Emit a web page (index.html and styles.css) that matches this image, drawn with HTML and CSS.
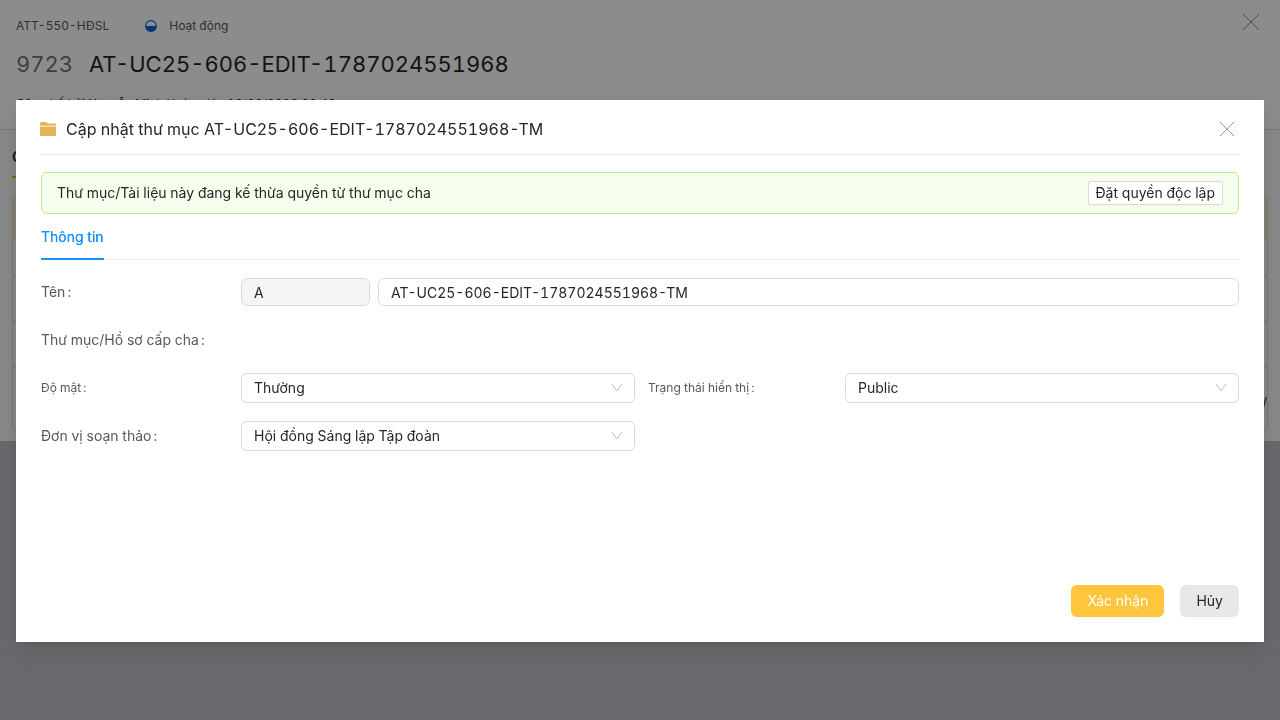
FILE: index.html
```
<!DOCTYPE html>
<html lang="vi">
<head>
  <meta charset="UTF-8" />
  <meta name="viewport" content="width=device-width, initial-scale=1.0" />
  <title>Cập nhật thư mục</title>
  <link rel="stylesheet" href="styles.css">
</head>
<body>

  <!-- ==== Record page ==== -->
  <div class="page">
    <header class="page-header">
      <div class="page-meta">
        <span class="page-code">ATT-550-HĐSL</span>
        <svg class="status-icon" viewBox="0 0 12 12" aria-hidden="true">
          <circle cx="6" cy="6" r="5.4" fill="#fff" stroke="#0065d6" stroke-width="1.1" />
          <path d="M0.6 6h10.8a5.4 5.4 0 0 1-10.8 0z" fill="#0065d6" />
        </svg>
        <span>Hoạt động</span>
        <button class="icon-btn page-close" type="button" aria-label="Đóng">
          <svg viewBox="0 0 18 18"><path d="M1 1l16 16M17 1L1 17" /></svg>
        </button>
      </div>
      <h1 class="page-title"><span class="page-number">9723</span>AT-UC25-606-EDIT-1787024551968</h1>
      <p class="page-author">Công bố bởi Nguyễn Minh Hoàng lúc 18/08/2026 09:40</p>
    </header>
    <section class="page-body">
      <nav class="page-tabs"><a href="#" class="page-tab">Chung</a></nav>
      <div class="panel">
        <div class="panel-head"></div>
        <div class="panel-row first"></div>
        <div class="panel-row"></div>
        <div class="panel-row"></div>
        <div class="panel-row last">/</div>
      </div>
    </section>
  </div>

  <!-- ==== Update folder dialog ==== -->
  <div class="mask">
    <div class="modal" role="dialog" aria-labelledby="modal-title">
      <div class="modal-header">
        <svg class="folder-icon" viewBox="0 0 16 14" aria-hidden="true">
          <path d="M0 5V1.2Q0 0 1.200 0H6l2 1.500h6.800Q16 1.500 16 2.700V5z" fill="#e5b35a" />
          <path d="M0 3.500h16v2H0z" fill="#f6dfb0" />
          <path d="M0 5h16v7.800q0 1.200-1.200 1.200H1.200Q0 14 0 12.800z" fill="#e5b35a" />
        </svg>
        <h2 id="modal-title" class="modal-title">Cập nhật thư mục AT-UC25-606-EDIT-1787024551968-TM</h2>
        <button class="icon-btn modal-close" type="button" aria-label="Đóng">
          <svg viewBox="0 0 18 18"><path d="M1 1l16 16M17 1L1 17" /></svg>
        </button>
      </div>

      <form class="modal-body">
        <div class="alert">
          <span>Thư mục/Tài liệu này đang kế thừa quyền từ thư mục cha</span>
          <button class="btn-small" type="button">Đặt quyền độc lập</button>
        </div>

        <nav class="tabs"><a href="#" class="tab active">Thông tin</a></nav>

        <div class="form">
          <div class="form-row">
            <label class="form-label" for="name">Tên</label>
            <div class="name-group">
              <input class="field field-prefix" type="text" value="A" aria-label="Tiền tố" disabled />
              <input id="name" class="field" type="text" value="AT-UC25-606-EDIT-1787024551968-TM" />
            </div>
          </div>

          <div class="form-row">
            <span class="form-label">Thư mục/Hồ sơ cấp cha</span>
          </div>

          <div class="form-row split">
            <div class="form-cell">
              <label class="form-label small" for="secrecy">Độ mật</label>
              <div class="select">
                <select id="secrecy"><option>Thường</option></select>
                <svg viewBox="0 0 12 12"><path d="M1 2l5 7 5-7" /></svg>
              </div>
            </div>
            <div class="form-cell">
              <label class="form-label small" for="visibility">Trạng thái hiển thị</label>
              <div class="select">
                <select id="visibility"><option>Public</option></select>
                <svg viewBox="0 0 12 12"><path d="M1 2l5 7 5-7" /></svg>
              </div>
            </div>
          </div>

          <div class="form-row split">
            <div class="form-cell">
              <label class="form-label" for="unit">Đơn vị soạn thảo</label>
              <div class="select">
                <select id="unit"><option>Hội đồng Sáng lập Tập đoàn</option></select>
                <svg viewBox="0 0 12 12"><path d="M1 2l5 7 5-7" /></svg>
              </div>
            </div>
          </div>
        </div>

        <div class="modal-footer">
          <button class="btn btn-primary" type="submit">Xác nhận</button>
          <button class="btn" type="button">Hủy</button>
        </div>
      </form>
    </div>
  </div>

</body>
</html>
```

FILE: styles.css
```
:root {
  --clr-text: #262626;
  --clr-label: #595959;
  --clr-border: #d9d9d9;
  --clr-primary: #ffc53d;
  --clr-link: #1890ff;
}

* { box-sizing: border-box; margin: 0; padding: 0; }
body {
  font-family: "Inter", sans-serif;
  font-size: 14px;
  font-feature-settings: "tnum";
  line-height: 22px;
  color: var(--clr-text);
  background: #bfc1c6;
}
button, input, select { font: inherit; font-feature-settings: inherit; color: inherit; }
a { text-decoration: none; }

.icon-btn {
  background: none; border: none;
  cursor: pointer;
}
.icon-btn svg { display: block; width: 100%; height: 100%; }
.icon-btn path { stroke: #8c8c8c; stroke-width: 1; fill: none; }

/* ---------- Record page ---------- */
.page { background: #fff; }
.page-header {
  height: 130px;
  padding: 15px 16px 0;
  border-bottom: 1px solid var(--clr-border);
  overflow: hidden;
}
.page-meta {
  display: flex; align-items: center;
  font-size: 12px; color: var(--clr-label);
}
.status-icon { width: 12px; height: 12px; margin: 0 12px 0 36px; }
.page-close { width: 18px; height: 18px; margin: -8px 4px 0 auto; }
.page-title {
  margin-top: 10px;
  font-size: 22px; font-weight: 400; line-height: 34px;
}
.page-number { margin-right: 16px; color: #737373; }
.page-author { margin-top: 12px; font-size: 12px; }

.page-body { padding: 16px 12px 8px; background: #fafafa; }
.page-tabs { display: flex; margin-bottom: 14px; }
.page-tab {
  height: 32px;
  color: var(--clr-text); font-weight: 600;
  border-bottom: 2px solid #faad14;
}
.panel {
  border: 1px solid var(--clr-border);
  border-radius: 8px;
  overflow: hidden;
}
.panel-head { height: 46px; background: #fff1d6; }
.panel-row { height: 45px; border-bottom: 1px solid var(--clr-border); }
.panel-row.first { height: 38px; }
.panel-row.last { height: 65px; padding-top: 25px; text-align: right; border-bottom: none; }

/* ---------- Dialog ---------- */
.mask {
  position: fixed; inset: 0;
  padding: 100px 16px 16px;
  background: rgba(0,0,0,.45);
}
.modal {
  padding: 0 24px 25px;
  background: #fff;
  box-shadow: 0 3px 6px -4px rgba(0,0,0,.12), 0 6px 16px rgba(0,0,0,.08), 0 9px 28px 8px rgba(0,0,0,.05);
}
.modal-header {
  display: flex; align-items: center;
  height: 55px;
  padding: 4px 5px 0 0;
  border-bottom: 1px solid #e4e6ef;
}
.folder-icon { width: 16px; height: 14px; margin-right: 10px; }
.modal-title { font-size: 16px; font-weight: 400; line-height: 24px; }
.modal-close { width: 16px; height: 16px; margin-left: auto; }

.modal-body { padding: 17px 1px 0; }
.alert {
  display: flex; align-items: center; justify-content: space-between;
  height: 42px;
  padding: 0 15px;
  background: #f6ffed;
  border: 1px solid #b7eb8f; border-radius: 6px;
}
.btn-small {
  height: 24px; padding: 0 7px;
  background: #fff;
  border: 1px solid var(--clr-border); border-radius: 2px;
  box-shadow: 0 2px 0 rgba(0,0,0,.02);
  cursor: pointer;
}

.tabs { display: flex; border-bottom: 1px solid #f0f0f0; }
.tab {
  height: 46px; padding-top: 12px;
  margin-bottom: -1px;
  color: var(--clr-label);
}
.tab.active {
  color: var(--clr-link);
  text-shadow: 0 0 0 currentColor;
  border-bottom: 2px solid var(--clr-link);
}

.form {
  display: flex; flex-direction: column; gap: 16px;
  min-height: 308px;
  padding-top: 16px;
}
.form-row, .form-cell { display: flex; align-items: center; min-height: 32px; }
.form-row.split { display: grid; grid-template-columns: 1fr 1fr; gap: 10px; }
.form-label { flex: 0 0 200px; color: var(--clr-label); white-space: nowrap; }
.form-label::after { content: ":"; margin-left: 2px; }
.form-label.small { font-size: 12px; }
.form-cell + .form-cell .form-label { padding-left: 3px; }

.name-group { flex: 1; display: flex; gap: 8px; }
.field {
  flex: 1; min-width: 0;
  height: 28px; padding: 0 12px;
  background: #fff;
  border: 1px solid var(--clr-border); border-radius: 6px;
}
.field-prefix { flex: 0 0 129px; background: #f5f5f5; }

.select { position: relative; flex: 1; }
.select select {
  display: block;
  width: 100%; height: 30px; padding: 0 30px 0 12px;
  appearance: none;
  background: #fff;
  border: 1px solid var(--clr-border); border-radius: 6px;
}
.select svg {
  position: absolute; top: 9px; right: 12px;
  width: 12px; height: 12px;
  pointer-events: none;
}
.select path { stroke: #bfbfbf; fill: none; }

.modal-footer { display: flex; justify-content: flex-end; gap: 16px; padding-top: 17px; }
.btn {
  height: 32px; padding: 0 16px;
  background: #e8e8e8;
  border: none; border-radius: 6px;
  box-shadow: 0 2px 0 rgba(0,0,0,.02);
  cursor: pointer;
}
.btn-primary { background: var(--clr-primary); color: #fff; }
```
